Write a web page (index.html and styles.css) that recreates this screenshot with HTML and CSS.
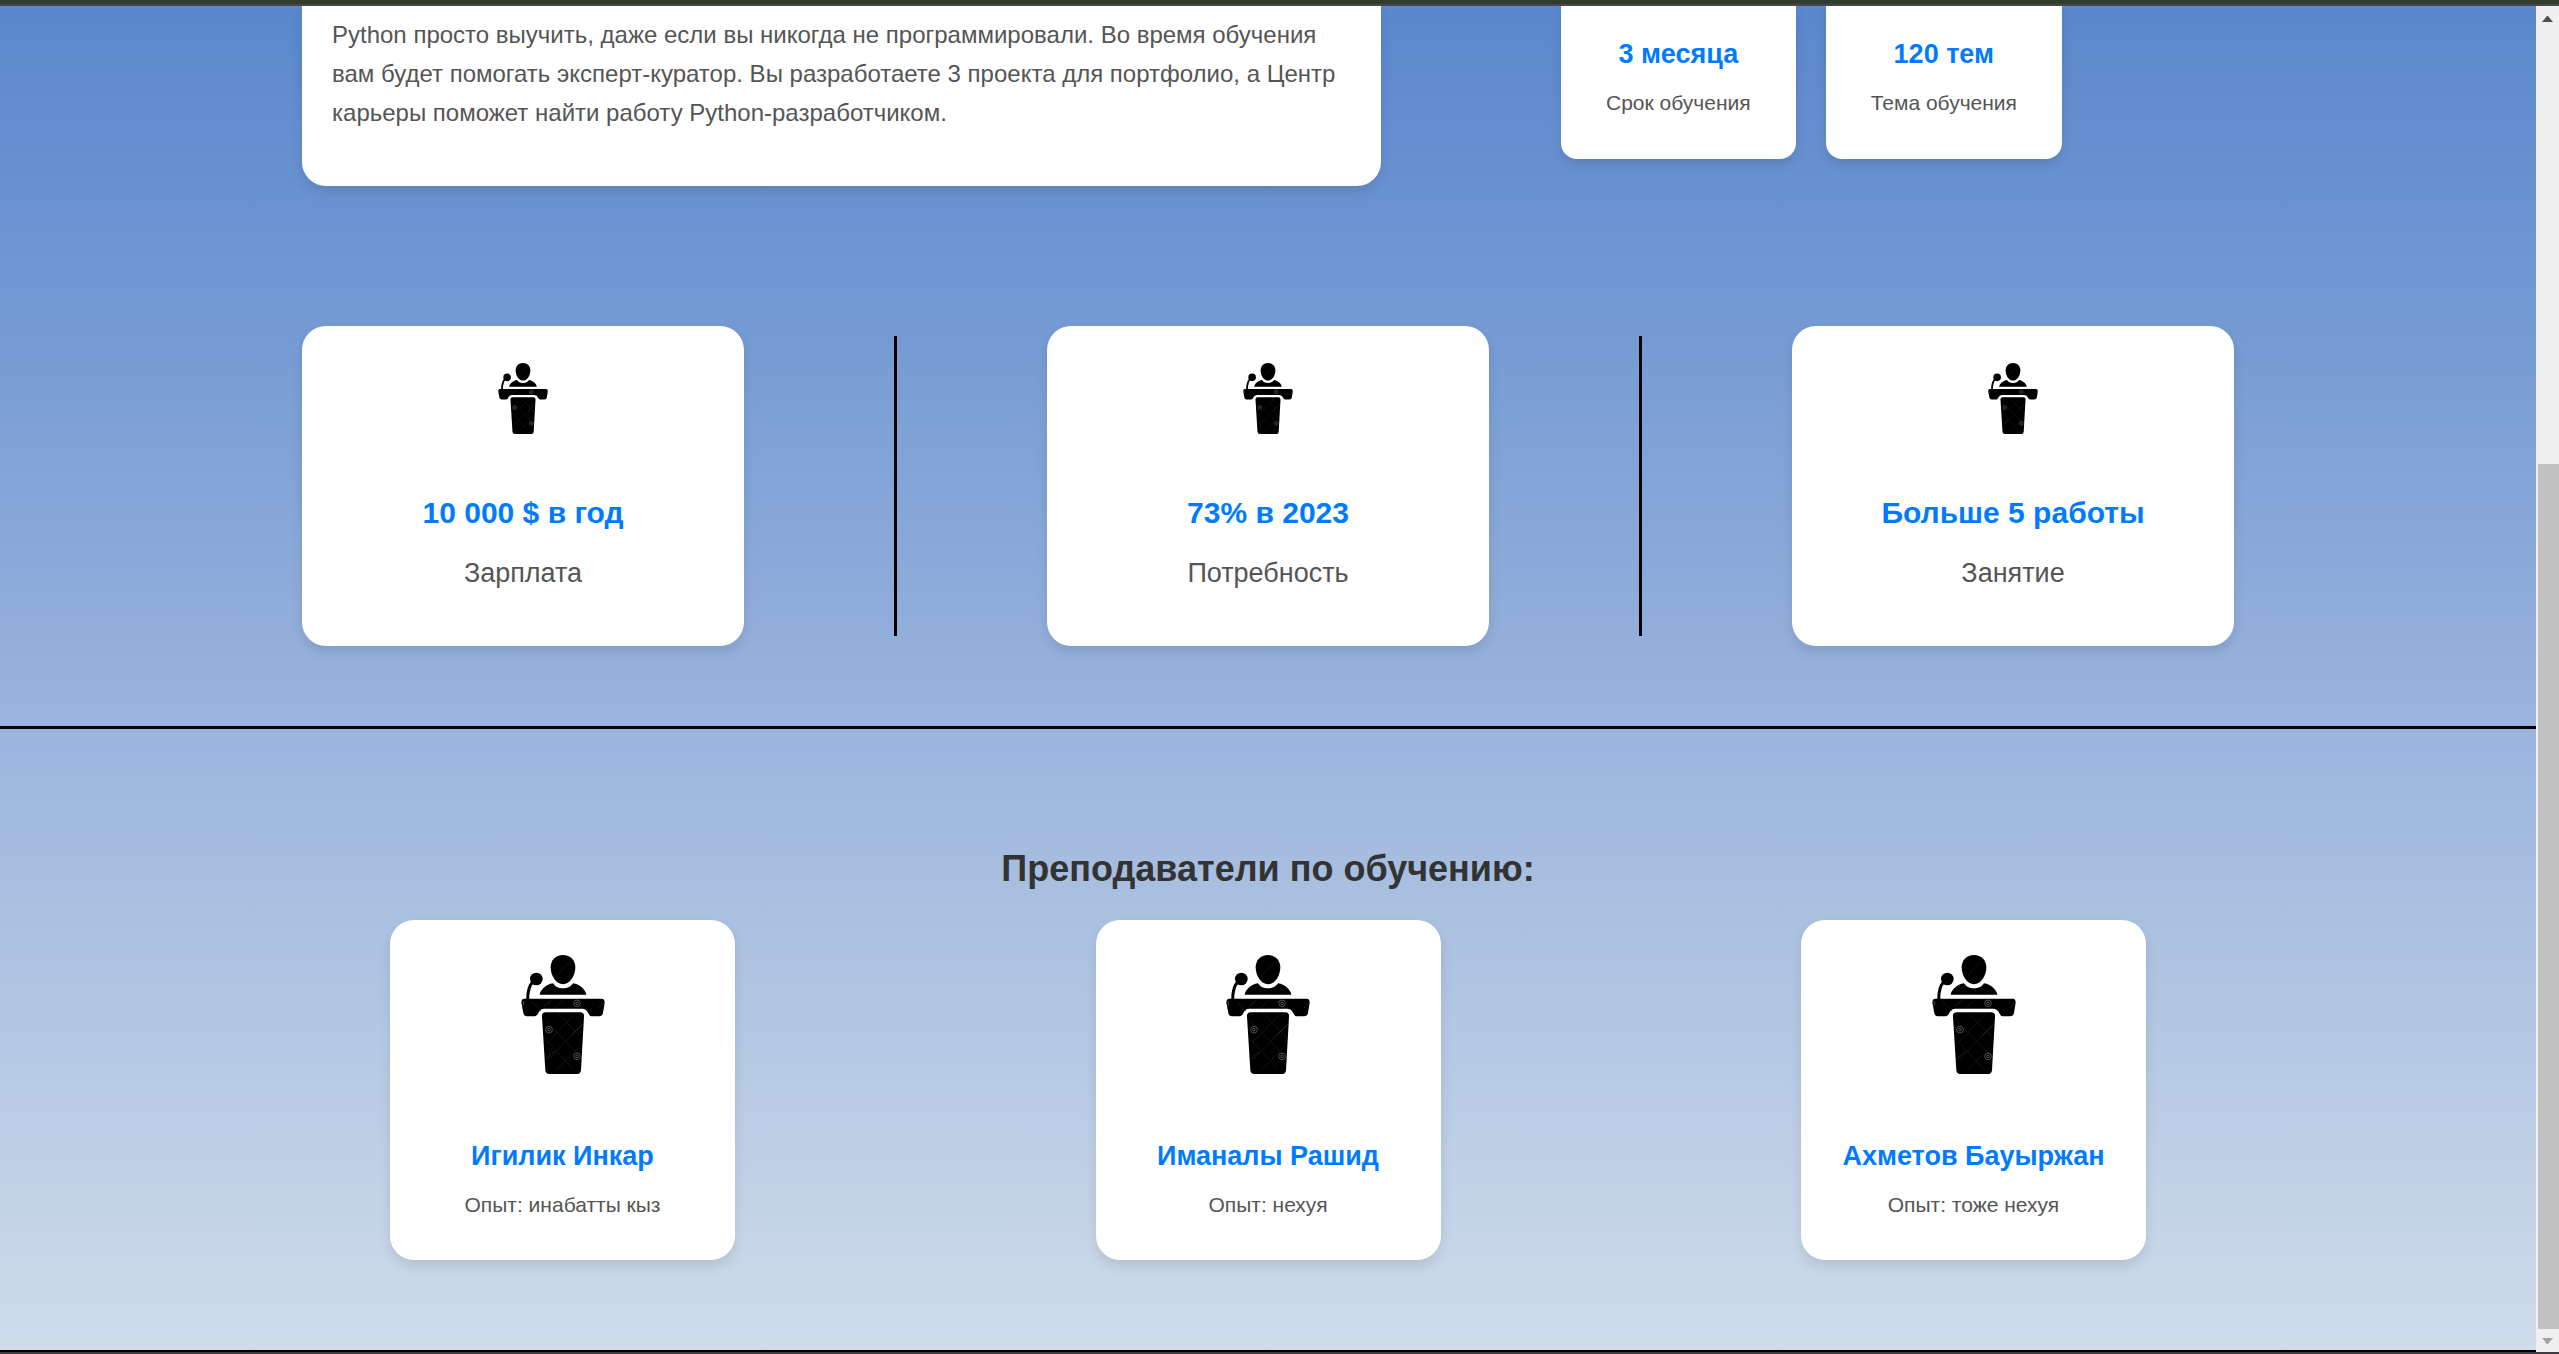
FILE: index.html
```html
<!DOCTYPE html>
<html lang="ru">
<head>
<meta charset="utf-8">
<title>Курс Python-разработчик</title>
<link rel="stylesheet" href="styles.css">
</head>
<body>
<svg class="sprite" aria-hidden="true">
  <symbol id="speaker" viewBox="0 0 252 357">
    <path d="M126 0c22 0 37 16 37 37 0 25-16 51-37 51S89 62 89 37C89 16 104 0 126 0z"/>
    <path d="M56 119c2-14 19-31 40-34 5 9 16 15 30 15s25-6 30-15c21 3 38 20 40 34z"/>
    <circle cx="46" cy="72" r="19"/>
    <path d="M36 80C24 92 20 106 20 134" fill="none" stroke="#000" stroke-width="9"/>
    <path d="M10 131h232q9 0 9 12l-5 31q-2 10-12 10h-22q-6 0-10-9-5-14-19-14H70q-13 0-18 13-4 10-10 10H18q-9 0-11-10L1 143q0-12 9-12z"/>
    <path d="M74 172h104q12 0 11 13l-9 161q-1 11-11 11H85q-11 0-12-11L63 185q-1-13 11-13z"/>
    <g fill="none" stroke="#1c1c1c" stroke-width="2">
      <path d="M104 66l40-44M70 112l30-22M100 162l30-30M80 262l80-84M84 312l94-98M104 348l72-74M72 196l98 100M76 256l78 84M114 178l66 68M30 138l30 30"/>
    </g>
    <g fill="none" stroke="#777" stroke-width="2">
      <circle cx="168" cy="145" r="10"/><circle cx="168" cy="145" r="4"/>
      <circle cx="84" cy="224" r="10"/><circle cx="84" cy="224" r="4"/>
      <circle cx="168" cy="304" r="10"/><circle cx="168" cy="304" r="4"/>
      <path d="M4 138q8 6 2 14" />
      <path d="M152 240l34-32M76 312l24-24M70 154l26-23M236 158l12-14" stroke="#555" stroke-dasharray="3 2"/>
    </g>
  </symbol>
</svg>
<div class="strip strip-top"></div>
<div class="viewport">
  <main class="page">
    <section class="intro">
      <div class="about">
        <p>Python просто выучить, даже если вы никогда не программировали. Во время обучения вам будет помогать эксперт-куратор. Вы разработаете 3 проекта для портфолио, а Центр карьеры поможет найти работу Python-разработчиком.</p>
      </div>
      <div class="facts">
        <div class="fact">
          <h3>3 месяца</h3>
          <p>Срок обучения</p>
        </div>
        <div class="fact">
          <h3>120 тем</h3>
          <p>Тема обучения</p>
        </div>
      </div>
    </section>

    <section class="stats">
      <div class="stat">
        <svg class="stat-icon" aria-hidden="true"><use href="#speaker"/></svg>
        <h2>10 000 $ в год</h2>
        <p>Зарплата</p>
      </div>
      <div class="divider"></div>
      <div class="stat">
        <svg class="stat-icon" aria-hidden="true"><use href="#speaker"/></svg>
        <h2>73% в 2023</h2>
        <p>Потребность</p>
      </div>
      <div class="divider"></div>
      <div class="stat">
        <svg class="stat-icon" aria-hidden="true"><use href="#speaker"/></svg>
        <h2>Больше 5 работы</h2>
        <p>Занятие</p>
      </div>
    </section>

    <hr>

    <section class="teachers">
      <h1>Преподаватели по обучению:</h1>
      <div class="teacher-list">
        <div class="teacher">
          <svg class="teacher-icon" aria-hidden="true"><use href="#speaker"/></svg>
          <h3>Игилик Инкар</h3>
          <p>Опыт: инабатты кыз</p>
        </div>
        <div class="teacher">
          <svg class="teacher-icon" aria-hidden="true"><use href="#speaker"/></svg>
          <h3>Иманалы Рашид</h3>
          <p>Опыт: нехуя</p>
        </div>
        <div class="teacher">
          <svg class="teacher-icon" aria-hidden="true"><use href="#speaker"/></svg>
          <h3>Ахметов Бауыржан</h3>
          <p>Опыт: тоже нехуя</p>
        </div>
      </div>
    </section>

    <hr>
  </main>
  <div class="scrollbar" aria-hidden="true">
    <svg class="arrow" viewBox="0 0 11 6"><path d="M0 6L5 0h1l5 6z" fill="#505050"/></svg>
    <div class="track"><div class="thumb"></div></div>
    <svg class="arrow" viewBox="0 0 11 6"><path d="M0 0h11L6 6H5z" fill="#a3a3a3"/></svg>
  </div>
</div>
<div class="strip strip-bottom"></div>
</body>
</html>
```
FILE: styles.css
```css
* {
  box-sizing: border-box;
}

body {
  display: flex;
  flex-direction: column;
  height: 100vh;
  margin: 0;
  overflow: hidden;
  font-family: "Liberation Sans", Arial, sans-serif;
  color: #555;
}

h1, h2, h3, p {
  margin: 0;
}

.sprite {
  display: none;
}

.strip {
  flex: none;
}

.strip-top {
  height: 6px;
  background: #303d2d;
  border-bottom: 2px solid #4a464a;
}

.strip-bottom {
  height: 2px;
  background: #403c40;
}

.viewport {
  display: flex;
  flex: 1;
  min-height: 0;
}

.page {
  flex: 1;
  overflow: hidden;
  background: linear-gradient(#5a87cd, #769bd4 25%, #9bb5dd 54%, #cfdcea);
}

hr {
  height: 3px;
  margin: 0;
  border: 0;
  background: #000;
}

/* Course description and key facts */

.intro {
  display: flex;
  align-items: flex-start;
  gap: 180px;
  padding: 0 302px;
}

.about,
.fact,
.stat,
.teacher {
  background: #fff;
  box-shadow: 0 6px 12px rgba(0, 0, 0, 0.1);
}

.about {
  width: 1079px;
  padding: 9px 30px 54px;
  border-radius: 0 0 24px 24px;
}

.about p {
  font-size: 24px;
  line-height: 39px;
}

.facts {
  display: flex;
  gap: 30px;
}

.fact {
  padding: 30px 45px 38px;
  border-radius: 0 0 16px 16px;
  text-align: center;
}

h3 {
  font-size: 27px;
  line-height: 36px;
  color: #007bff;
}

.fact p,
.teacher p {
  margin-top: 13px;
  font-size: 21px;
  line-height: 36px;
}

/* Market figures */

.stats {
  display: flex;
  align-items: center;
  justify-content: space-between;
  padding: 140px 302px 80px;
}

.stat,
.teacher {
  display: flex;
  flex-direction: column;
  align-items: center;
  border-radius: 24px;
  text-align: center;
}

.stat {
  width: 442px;
  padding: 37px 30px 53px;
}

.stat-icon {
  width: 50px;
  height: 71px;
}

.stat h2 {
  margin-top: 59px;
  font-size: 30px;
  line-height: 40px;
  color: #007bff;
}

.stat p {
  margin-top: 20px;
  font-size: 27px;
  line-height: 40px;
}

.divider {
  width: 3px;
  height: 300px;
  background: #000;
}

/* Teachers */

.teachers {
  padding: 116px 390px 90px;
}

h1 {
  font-size: 36px;
  line-height: 48px;
  color: #333;
  text-align: center;
}

.teacher-list {
  display: flex;
  justify-content: space-between;
  margin-top: 27px;
}

.teacher {
  width: 345px;
  padding: 35px 30px 37px;
}

.teacher-icon {
  width: 84px;
  height: 119px;
}

.teacher h3 {
  margin-top: 64px;
}

/* Scrollbar */

.scrollbar {
  display: flex;
  flex: none;
  flex-direction: column;
  align-items: center;
  width: 23px;
  padding: 10px 0 8px;
  background: #f0f0f0;
}

.arrow {
  width: 11px;
  height: 6px;
}

.track {
  display: flex;
  flex: 1;
  flex-direction: column;
  align-self: stretch;
  padding: 9px 0 9px 2px;
}

.track::before {
  flex: 1;
  content: "";
}

.thumb {
  flex: 2;
  background: #c1c1c1;
}
```
